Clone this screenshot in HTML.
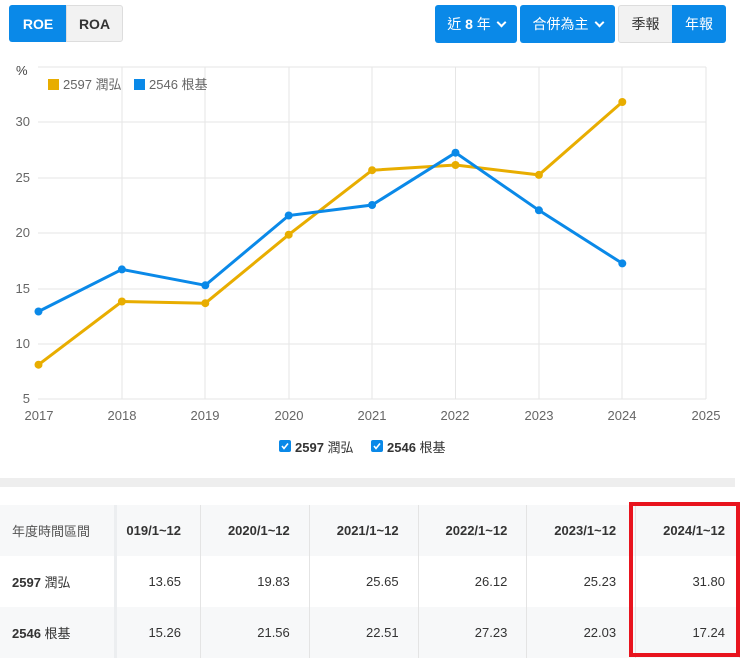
<!DOCTYPE html>
<html><head><meta charset="utf-8"><style>
body{margin:0;width:740px;height:658px;overflow:hidden;background:#fff;font-family:"Liberation Sans","Noto Sans CJK TC",sans-serif;position:relative}
.b{position:absolute;box-sizing:border-box;display:flex;align-items:center;justify-content:center;font-size:14px}
.blue{background:#0a89e8;color:#fff}
.gray{background:#f2f2f2;color:#333;border:1px solid #ddd}
table{position:absolute;left:0;top:505px;border-collapse:collapse;font-size:13px;color:#333}
td{height:51px;border-right:1px solid #e4e4e4;text-align:right;padding:0 19px 0 0;box-sizing:border-box}
td.f{text-align:left;padding-left:12px;border-right:3px solid #eceef0}
tr.h td{background:#f7f8f9;font-weight:bold}
tr.h td.f{font-weight:normal;color:#555}
tr.z td{background:#f7f8f9}
.chev{display:inline-block;width:5px;height:5px;border-right:2px solid #fff;border-bottom:2px solid #fff;transform:rotate(45deg);margin:-4px 0 0 7px}
</style></head><body>
<div class="b blue" style="left:9px;top:5px;width:58px;height:37px;border-radius:3px 0 0 3px;font-weight:bold">ROE</div>
<div class="b gray" style="left:66px;top:5px;width:57px;height:37px;border-radius:0 3px 3px 0;font-weight:bold">ROA</div>
<div class="b blue" style="left:435px;top:5px;width:82px;height:38px;border-radius:3px">近&nbsp;<b>8</b>&nbsp;年<span class="chev"></span></div>
<div class="b blue" style="left:520px;top:5px;width:95px;height:38px;border-radius:3px">合併為主<span class="chev"></span></div>
<div class="b gray" style="left:618px;top:5px;width:55px;height:38px;border-radius:3px 0 0 3px">季報</div>
<div class="b blue" style="left:672px;top:5px;width:54px;height:38px;border-radius:0 3px 3px 0">年報</div>
<svg style="position:absolute;left:0;top:0" width="740" height="470" font-family="Liberation Sans, Noto Sans CJK TC, sans-serif">
<g stroke="#e6e6e6" stroke-width="1">
<line x1="38" y1="67" x2="706" y2="67"/><line x1="38" y1="122" x2="706" y2="122"/><line x1="38" y1="178" x2="706" y2="178"/><line x1="38" y1="233" x2="706" y2="233"/><line x1="38" y1="289" x2="706" y2="289"/><line x1="38" y1="344" x2="706" y2="344"/><line x1="38" y1="399" x2="706" y2="399"/>
<line x1="122" y1="67" x2="122" y2="399"/><line x1="205" y1="67" x2="205" y2="399"/><line x1="289" y1="67" x2="289" y2="399"/><line x1="372" y1="67" x2="372" y2="399"/><line x1="455.5" y1="67" x2="455.5" y2="399"/><line x1="539" y1="67" x2="539" y2="399"/><line x1="622" y1="67" x2="622" y2="399"/><line x1="706" y1="67" x2="706" y2="399"/>
</g>
<g font-size="13" fill="#666" text-anchor="end">
<text x="30" y="126">30</text><text x="30" y="182">25</text><text x="30" y="237">20</text><text x="30" y="293">15</text><text x="30" y="348">10</text><text x="30" y="403">5</text>
</g>
<text x="16" y="75" font-size="13" fill="#444">%</text>
<g font-size="13" fill="#666" text-anchor="middle">
<text x="39" y="420">2017</text><text x="122" y="420">2018</text><text x="205" y="420">2019</text><text x="289" y="420">2020</text><text x="372" y="420">2021</text><text x="455" y="420">2022</text><text x="539" y="420">2023</text><text x="622" y="420">2024</text><text x="706" y="420">2025</text>
</g>
<rect x="48" y="79" width="11" height="11" fill="#e8ad00"/><text x="63" y="89" font-size="13" fill="#666">2597 潤弘</text>
<rect x="134" y="79" width="11" height="11" fill="#0a89e8"/><text x="149" y="89" font-size="13" fill="#666">2546 根基</text>
<polyline fill="none" stroke="#e8ad00" stroke-width="3" points="38.5,364.7 121.9,301.5 205.3,303.2 288.7,234.7 372.1,170.2 455.5,165 538.9,174.9 622.3,102"/>
<g fill="#e8ad00"><circle cx="38.5" cy="364.7" r="4"/><circle cx="121.9" cy="301.5" r="4"/><circle cx="205.3" cy="303.2" r="4"/><circle cx="288.7" cy="234.7" r="4"/><circle cx="372.1" cy="170.2" r="4"/><circle cx="455.5" cy="165" r="4"/><circle cx="538.9" cy="174.9" r="4"/><circle cx="622.3" cy="102" r="4"/></g>
<polyline fill="none" stroke="#0a89e8" stroke-width="3" points="38.5,311.5 121.9,269.4 205.3,285.3 288.7,215.5 372.1,205 455.5,152.7 538.9,210.3 622.3,263.4"/>
<g fill="#0a89e8"><circle cx="38.5" cy="311.5" r="4"/><circle cx="121.9" cy="269.4" r="4"/><circle cx="205.3" cy="285.3" r="4"/><circle cx="288.7" cy="215.5" r="4"/><circle cx="372.1" cy="205" r="4"/><circle cx="455.5" cy="152.7" r="4"/><circle cx="538.9" cy="210.3" r="4"/><circle cx="622.3" cy="263.4" r="4"/></g>
<rect x="279" y="440" width="12" height="12" rx="2" fill="#0a89e8"/><path d="M282 446l2 2.5 4-5" stroke="#fff" stroke-width="1.6" fill="none"/>
<text x="295" y="452" font-size="13" fill="#333"><tspan font-weight="bold">2597</tspan> 潤弘</text>
<rect x="371" y="440" width="12" height="12" rx="2" fill="#0a89e8"/><path d="M374 446l2 2.5 4-5" stroke="#fff" stroke-width="1.6" fill="none"/>
<text x="387" y="452" font-size="13" fill="#333"><tspan font-weight="bold">2546</tspan> 根基</text>
</svg>
<div style="position:absolute;left:0;top:478px;width:735px;height:9px;background:#eee"></div>
<table>
<tr class="h"><td class="f" style="width:116px">年度時間區間</td><td style="width:85px;padding-left:0;overflow:hidden;white-space:nowrap;padding-right:19px">019/1~12</td><td style="width:109px">2020/1~12</td><td style="width:109px">2021/1~12</td><td style="width:109px">2022/1~12</td><td style="width:109px">2023/1~12</td><td style="width:104px;padding-right:14px">2024/1~12</td></tr>
<tr><td class="f"><b>2597</b> 潤弘</td><td>13.65</td><td>19.83</td><td>25.65</td><td>26.12</td><td>25.23</td><td style="padding-right:14px">31.80</td></tr>
<tr class="z"><td class="f"><b>2546</b> 根基</td><td>15.26</td><td>21.56</td><td>22.51</td><td>27.23</td><td>22.03</td><td style="padding-right:14px">17.24</td></tr>
</table>
<div style="position:absolute;left:629px;top:502px;width:111px;height:155px;border:4px solid #e8141e;box-sizing:border-box"></div>
</body></html>
